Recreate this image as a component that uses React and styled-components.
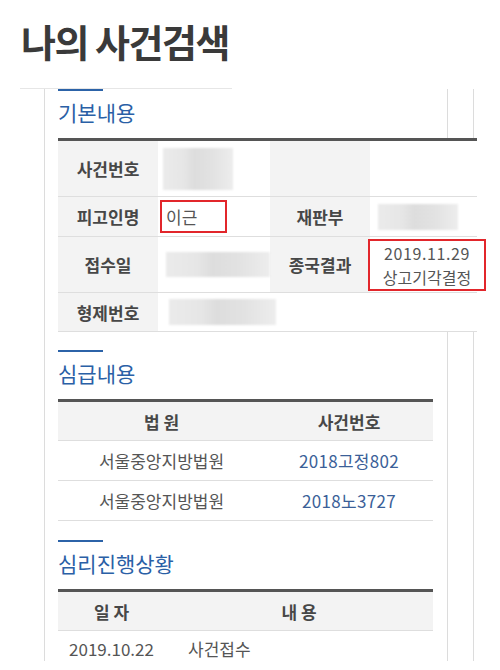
import React from "react";
import styled, { createGlobalStyle } from "styled-components";

const GlobalStyle = createGlobalStyle`
  html, body { margin: 0; padding: 0; background: #fff; }
  body {
    font-family: "Noto Sans CJK KR", "Noto Sans", sans-serif;
    width: 500px;
    height: 670px;
    overflow: hidden;
    color: #555;
  }
  * { box-sizing: border-box; }
`;

const Page = styled.div`
  display: flex;
  flex-direction: column;
  align-items: flex-start;
`;

const Title = styled.h1`
  margin: 0;
  padding: 18px 0 0 21px;
  font-size: 38px;
  line-height: 45px;
  font-weight: 700;
  letter-spacing: -1.5px;
  color: #3a3a3a;
`;

const TopRule = styled.div`
  margin: 25px 0 0 20px;
  width: 212px;
  height: 1px;
  background: #e6e6e6;
`;

const Frame = styled.div`
  margin-left: 44px;
  width: 430px;
  border-left: 1px solid #dcdcdc;
  border-right: 1px solid #dcdcdc;
`;

const Inner = styled.div`
  width: 403px;
  border-right: 1px solid #dcdcdc;
  padding-left: 13px;
  display: flex;
  flex-direction: column;
  align-items: flex-start;
`;

const Section = styled.section`
  display: flex;
  flex-direction: column;
  align-items: flex-start;
  margin-top: ${(p) => p.$gap || 0}px;
`;

const SectionBar = styled.div`
  width: 45px;
  height: 2px;
  background: #2c63a8;
`;

const SectionTitle = styled.h2`
  margin: 7px 0 12px;
  font-size: 21px;
  line-height: 28px;
  font-weight: 400;
  color: #2a60a6;
`;

const Table = styled.div`
  width: ${(p) => p.$width}px;
  border-top: 3px solid #555;
  background: #fff;
  display: flex;
  flex-direction: column;
`;

const Row = styled.div`
  display: grid;
  grid-template-columns: ${(p) => p.$cols};
  height: ${(p) => p.$h}px;
  border-bottom: ${(p) => (p.$last ? "none" : "1px solid #dedede")};
`;

const HeadCell = styled.div`
  background: #f3f3f3;
  display: flex;
  align-items: center;
  justify-content: center;
  font-size: 17px;
  font-weight: 700;
  color: #474747;
  white-space: pre;
`;

const Cell = styled.div`
  display: flex;
  align-items: center;
  justify-content: ${(p) => (p.$center ? "center" : "flex-start")};
  padding-left: ${(p) => p.$pl || 0}px;
  padding-top: ${(p) => p.$pt || 0}px;
  grid-column: ${(p) => p.$span || "auto"};
  font-size: 17px;
  letter-spacing: ${(p) => (p.$link ? "0.3px" : "0")};
  color: ${(p) => (p.$link ? "#3b5f98" : "#555")};
  white-space: nowrap;
`;

const Blur = styled.div`
  width: ${(p) => p.$w}px;
  height: ${(p) => p.$h}px;
  margin-left: ${(p) => p.$ml || 0}px;
  background: linear-gradient(
    90deg,
    #ebebeb 0%,
    #e6e6e6 30%,
    #dddddd 45%,
    #e2e2e2 70%,
    #ededed 100%
  );
  filter: blur(1px);
`;

const RedBox = styled.div`
  flex: none;
  margin-left: ${(p) => p.$ml || 0}px;
  width: ${(p) => p.$w}px;
  height: ${(p) => p.$h}px;
  border: 2px solid #e2262b;
  display: flex;
  flex-direction: column;
  justify-content: center;
  align-items: ${(p) => (p.$center ? "center" : "flex-start")};
  padding-left: ${(p) => p.$pl || 0}px;
  font-size: 17px;
  line-height: 20px;
  color: #555;
  background: #fff;
`;

const BoxLine = styled.span`
  display: block;
  font-size: 16px;
  line-height: 24px;
  letter-spacing: ${(p) => p.$ls || 0}px;
`;

const T1 = "100px 112px 100px 107px";
const T2 = "207px 168px";
const T3 = "107px 268px";

export default function App() {
  return (
    <>
      <GlobalStyle />
      <Page>
        <Title>나의 사건검색</Title>
        <TopRule />
        <Frame>
          <Inner>
            <Section>
              <SectionBar />
              <SectionTitle>기본내용</SectionTitle>
              <Table $width={419}>
                <Row $cols={T1} $h={56}>
                  <HeadCell>사건번호</HeadCell>
                  <Cell>
                    <Blur $w={70} $h={42} $ml={5} />
                  </Cell>
                  <HeadCell />
                  <Cell />
                </Row>
                <Row $cols={T1} $h={40}>
                  <HeadCell>피고인명</HeadCell>
                  <Cell>
                    <RedBox $ml={2} $w={67} $h={33} $pl={4}>
                      이근
                    </RedBox>
                  </Cell>
                  <HeadCell>재판부</HeadCell>
                  <Cell>
                    <Blur $w={80} $h={26} $ml={8} />
                  </Cell>
                </Row>
                <Row $cols={T1} $h={56}>
                  <HeadCell>접수일</HeadCell>
                  <Cell>
                    <Blur $w={104} $h={25} $ml={8} />
                  </Cell>
                  <HeadCell>종국결과</HeadCell>
                  <Cell>
                    <RedBox $ml={-2} $w={118} $h={52} $center>
                      <BoxLine $ls={0.6}>2019.11.29</BoxLine>
                      <BoxLine>상고기각결정</BoxLine>
                    </RedBox>
                  </Cell>
                </Row>
                <Row $cols={T1} $h={39}>
                  <HeadCell>형제번호</HeadCell>
                  <Cell $span="2 / 5">
                    <Blur $w={107} $h={26} $ml={11} />
                  </Cell>
                </Row>
              </Table>
            </Section>

            <Section $gap={18}>
              <SectionBar />
              <SectionTitle>심급내용</SectionTitle>
              <Table $width={375}>
                <Row $cols={T2} $h={39}>
                  <HeadCell>법 원</HeadCell>
                  <HeadCell>사건번호</HeadCell>
                </Row>
                <Row $cols={T2} $h={40}>
                  <Cell $center>서울중앙지방법원</Cell>
                  <Cell $center $link>2018고정802</Cell>
                </Row>
                <Row $cols={T2} $h={40}>
                  <Cell $center>서울중앙지방법원</Cell>
                  <Cell $center $link>2018노3727</Cell>
                </Row>
              </Table>
            </Section>

            <Section $gap={19}>
              <SectionBar />
              <SectionTitle>심리진행상황</SectionTitle>
              <Table $width={375}>
                <Row $cols={T3} $h={39}>
                  <HeadCell>일 자</HeadCell>
                  <HeadCell>내 용</HeadCell>
                </Row>
                <Row $cols={T3} $h={30} $last>
                  <Cell $center $pt={4}>2019.10.22</Cell>
                  <Cell $pl={23} $pt={4}>사건접수</Cell>
                </Row>
              </Table>
            </Section>
          </Inner>
        </Frame>
      </Page>
    </>
  );
}
